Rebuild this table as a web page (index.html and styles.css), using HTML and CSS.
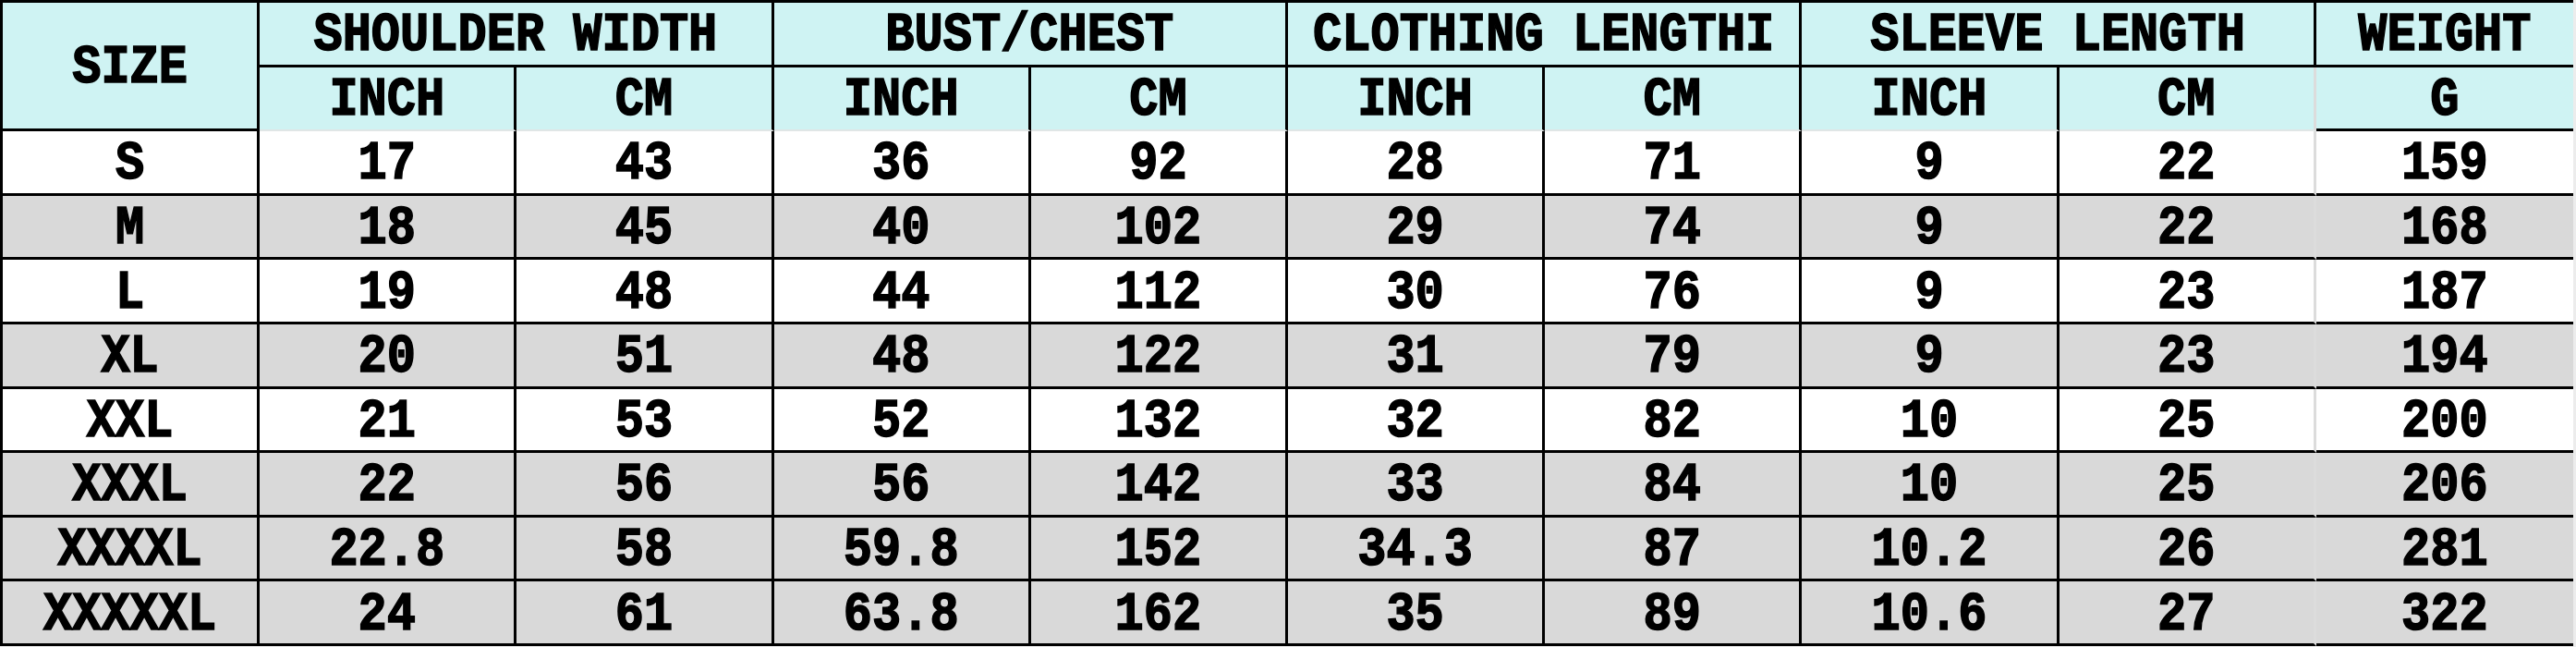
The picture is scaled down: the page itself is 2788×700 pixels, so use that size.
FILE: index.html
```html
<!DOCTYPE html>
<html lang="en">
<head>
<meta charset="utf-8">
<title>Size Chart</title>
<link rel="stylesheet" href="styles.css">
</head>
<body>
<div class="chart">
  <div class="row head">
    <div class="cell size-h"><span class="t">SIZE</span></div>
    <div class="cell group"><span class="t">SHOULDER WIDTH</span></div>
    <div class="cell group"><span class="t">BUST/CHEST</span></div>
    <div class="cell group"><span class="t">CLOTHING LENGTHI</span></div>
    <div class="cell group"><span class="t">SLEEVE LENGTH</span></div>
    <div class="cell weight"><span class="t">WEIGHT</span></div>
  </div>
  <div class="row head units">
    <div class="cell unit"><span class="t">INCH</span></div>
    <div class="cell unit"><span class="t">CM</span></div>
    <div class="cell unit"><span class="t">INCH</span></div>
    <div class="cell unit"><span class="t">CM</span></div>
    <div class="cell unit"><span class="t">INCH</span></div>
    <div class="cell unit"><span class="t">CM</span></div>
    <div class="cell unit"><span class="t">INCH</span></div>
    <div class="cell unit pre-w"><span class="t">CM</span></div>
    <div class="cell unit g weight"><span class="t">G</span></div>
  </div>
  <div class="row">
    <div class="cell"><span class="t">S</span></div>
    <div class="cell"><span class="t">17</span></div>
    <div class="cell"><span class="t">43</span></div>
    <div class="cell"><span class="t">36</span></div>
    <div class="cell"><span class="t">92</span></div>
    <div class="cell"><span class="t">28</span></div>
    <div class="cell"><span class="t">71</span></div>
    <div class="cell"><span class="t">9</span></div>
    <div class="cell pre-w"><span class="t">22</span></div>
    <div class="cell weight"><span class="t">159</span></div>
  </div>
  <div class="row alt">
    <div class="cell"><span class="t">M</span></div>
    <div class="cell"><span class="t">18</span></div>
    <div class="cell"><span class="t">45</span></div>
    <div class="cell"><span class="t">40</span></div>
    <div class="cell"><span class="t">102</span></div>
    <div class="cell"><span class="t">29</span></div>
    <div class="cell"><span class="t">74</span></div>
    <div class="cell"><span class="t">9</span></div>
    <div class="cell pre-w"><span class="t">22</span></div>
    <div class="cell weight"><span class="t">168</span></div>
  </div>
  <div class="row">
    <div class="cell"><span class="t">L</span></div>
    <div class="cell"><span class="t">19</span></div>
    <div class="cell"><span class="t">48</span></div>
    <div class="cell"><span class="t">44</span></div>
    <div class="cell"><span class="t">112</span></div>
    <div class="cell"><span class="t">30</span></div>
    <div class="cell"><span class="t">76</span></div>
    <div class="cell"><span class="t">9</span></div>
    <div class="cell pre-w"><span class="t">23</span></div>
    <div class="cell weight"><span class="t">187</span></div>
  </div>
  <div class="row alt">
    <div class="cell"><span class="t">XL</span></div>
    <div class="cell"><span class="t">20</span></div>
    <div class="cell"><span class="t">51</span></div>
    <div class="cell"><span class="t">48</span></div>
    <div class="cell"><span class="t">122</span></div>
    <div class="cell"><span class="t">31</span></div>
    <div class="cell"><span class="t">79</span></div>
    <div class="cell"><span class="t">9</span></div>
    <div class="cell pre-w"><span class="t">23</span></div>
    <div class="cell weight"><span class="t">194</span></div>
  </div>
  <div class="row">
    <div class="cell"><span class="t">XXL</span></div>
    <div class="cell"><span class="t">21</span></div>
    <div class="cell"><span class="t">53</span></div>
    <div class="cell"><span class="t">52</span></div>
    <div class="cell"><span class="t">132</span></div>
    <div class="cell"><span class="t">32</span></div>
    <div class="cell"><span class="t">82</span></div>
    <div class="cell"><span class="t">10</span></div>
    <div class="cell pre-w"><span class="t">25</span></div>
    <div class="cell weight"><span class="t">200</span></div>
  </div>
  <div class="row alt">
    <div class="cell"><span class="t">XXXL</span></div>
    <div class="cell"><span class="t">22</span></div>
    <div class="cell"><span class="t">56</span></div>
    <div class="cell"><span class="t">56</span></div>
    <div class="cell"><span class="t">142</span></div>
    <div class="cell"><span class="t">33</span></div>
    <div class="cell"><span class="t">84</span></div>
    <div class="cell"><span class="t">10</span></div>
    <div class="cell pre-w"><span class="t">25</span></div>
    <div class="cell weight"><span class="t">206</span></div>
  </div>
  <div class="row alt">
    <div class="cell"><span class="t">XXXXL</span></div>
    <div class="cell"><span class="t">22.8</span></div>
    <div class="cell"><span class="t">58</span></div>
    <div class="cell"><span class="t">59.8</span></div>
    <div class="cell"><span class="t">152</span></div>
    <div class="cell"><span class="t">34.3</span></div>
    <div class="cell"><span class="t">87</span></div>
    <div class="cell"><span class="t">10.2</span></div>
    <div class="cell pre-w"><span class="t">26</span></div>
    <div class="cell weight"><span class="t">281</span></div>
  </div>
  <div class="row alt">
    <div class="cell"><span class="t">XXXXXL</span></div>
    <div class="cell"><span class="t">24</span></div>
    <div class="cell"><span class="t">61</span></div>
    <div class="cell"><span class="t">63.8</span></div>
    <div class="cell"><span class="t">162</span></div>
    <div class="cell"><span class="t">35</span></div>
    <div class="cell"><span class="t">89</span></div>
    <div class="cell"><span class="t">10.6</span></div>
    <div class="cell pre-w"><span class="t">27</span></div>
    <div class="cell weight"><span class="t">322</span></div>
  </div>
</div>
</body>
</html>
```

FILE: styles.css
```css
html, body {
  margin: 0;
  padding: 0;
  background: #ececec;
}

.chart {
  box-sizing: border-box;
  width: 2785px;
  display: grid;
  grid-template-columns: repeat(10, 1fr);
  grid-auto-rows: 69.6px;
  border-top: 3px solid #000;
  border-left: 3px solid #000;
  background: #fff;
}

.row {
  display: contents;
}

.cell {
  box-sizing: border-box;
  display: flex;
  align-items: center;
  justify-content: center;
  padding-top: 6px;
  border-right: 3px solid #000;
  border-bottom: 3px solid #000;
  background: #fff;
  color: #000;
  font-family: "Liberation Mono", "DejaVu Sans Mono", monospace;
  font-weight: bold;
  font-size: 52px;
  line-height: 1;
  white-space: nowrap;
  -webkit-text-stroke: 1.4px #000;
}

.t {
  display: inline-block;
  transform: scaleY(1.15);
}

.head .cell {
  background: #cff3f3;
}

.size-h {
  grid-row: span 2;
}

.group {
  grid-column: span 2;
}

.unit {
  border-bottom: 2px solid #e0e6e6;
}

.unit.g {
  border-bottom: 3px solid #000;
}

.pre-w {
  border-right-color: #dcdcdc;
}

.weight {
  border-right: none;
}

.row.alt .cell {
  background: #d9d9d9;
}
```
